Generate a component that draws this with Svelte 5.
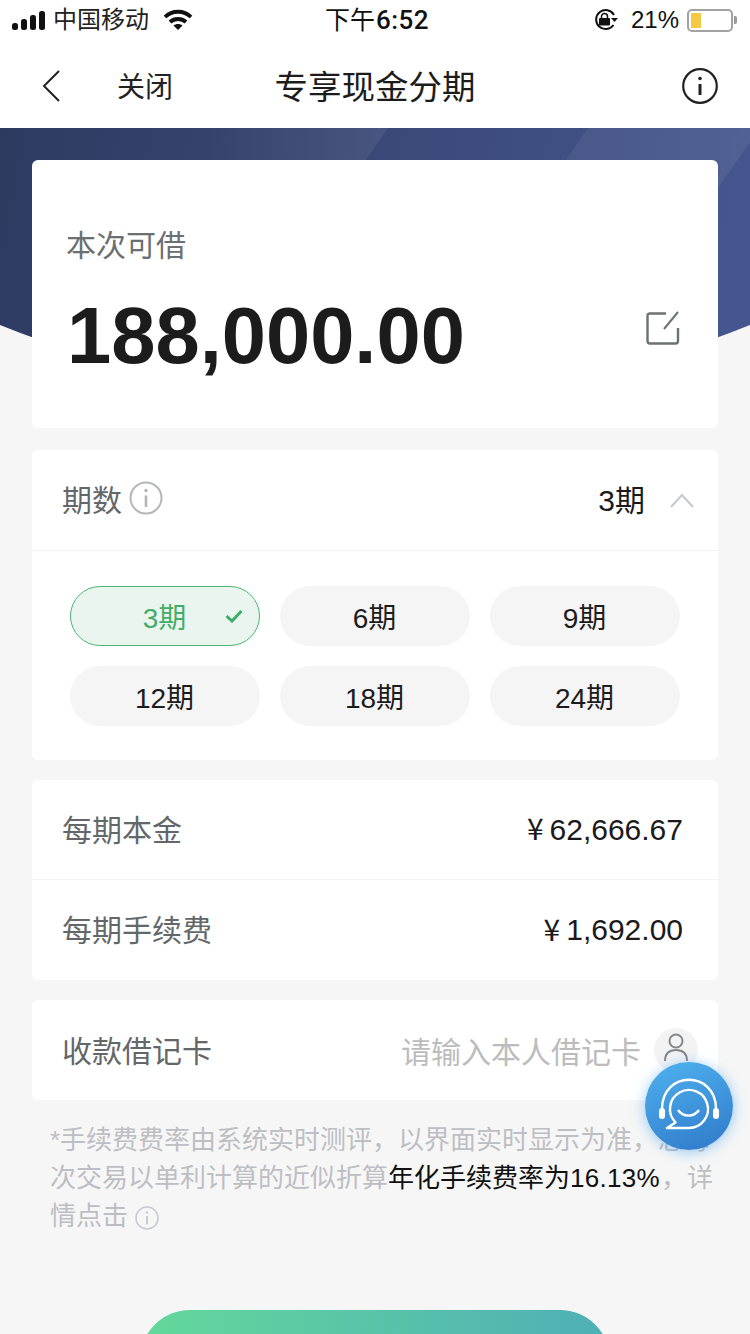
<script>
  const terms = ["3期", "6期", "9期", "12期", "18期", "24期"];
  let selected = $state("3期");
</script>

<div class="page">
  <header class="status">
    <div class="status-left">
      <svg class="signal" width="34" height="19" viewBox="0 0 34 19" fill="#111">
        <rect x="0" y="12" width="6" height="7" rx="2.500" />
        <rect x="9" y="8" width="6" height="11" rx="2.500" />
        <rect x="18" y="4" width="6" height="15" rx="2.500" />
        <rect x="27" y="0" width="6" height="19" rx="2.500" />
      </svg>
      <span class="carrier">中国移动</span>
      <svg class="wifi" width="30" height="22" viewBox="0 0 30 22" fill="none" stroke="#111" stroke-width="3.800">
        <path d="M2 8 C9 1 21 1 28 8" />
        <path d="M7 13 C11.500 9 18.500 9 23 13" />
        <path d="M15 21 L10.500 16.500 C13 14.500 17 14.500 19.500 16.500 Z" fill="#111" stroke="none" />
      </svg>
    </div>
    <div class="time"><span>下午</span><span class="clock">6:52</span></div>
    <div class="status-right">
      <svg width="24" height="22" viewBox="0 0 24 22" fill="none">
        <path d="M20 6 A9.500 9.500 0 1 0 19.500 16" stroke="#111" stroke-width="2" />
        <path d="M17 9 L24 9 L20.500 13 Z" fill="#111" />
        <rect x="5" y="9" width="11" height="7.500" rx="1" fill="#111" />
        <path d="M7.500 9 V7.500 A3 3 0 0 1 13.500 7.500 V9" stroke="#111" stroke-width="1.500" />
      </svg>
      <span class="percent">21%</span>
      <div class="battery"><div class="battery-level"></div></div>
      <div class="battery-cap"></div>
    </div>
  </header>

  <nav class="nav">
    <div class="nav-left">
      <svg width="20" height="34" viewBox="0 0 20 34" fill="none" stroke="#222" stroke-width="2">
        <path d="M17 2 L2 17 L17 32" />
      </svg>
      <span class="close">关闭</span>
    </div>
    <h1 class="title">专享现金分期</h1>
    <svg class="nav-info" width="36" height="36" viewBox="0 0 36 36" fill="none" stroke="#222">
      <circle cx="18" cy="18" r="16.800" stroke-width="2.200" />
      <path d="M18 16 V27" stroke-width="3" />
      <circle cx="18" cy="10.500" r="1.800" fill="#222" stroke="none" />
    </svg>
  </nav>

  <div class="hero">
    <svg class="hero-art" width="750" height="270" viewBox="0 0 750 270">
      <defs>
        <linearGradient id="bandA" x1="0" x2="1" y1="0" y2="0">
          <stop offset="0" stop-color="#fff" stop-opacity="0" />
          <stop offset="1" stop-color="#fff" stop-opacity="0.07" />
        </linearGradient>
        <linearGradient id="bandB" x1="0" x2="1" y1="0" y2="0">
          <stop offset="0" stop-color="#fff" stop-opacity="0.03" />
          <stop offset="1" stop-color="#fff" stop-opacity="0.07" />
        </linearGradient>
      </defs>
      <polygon points="200,0 260,0 388,0 200,270" fill="url(#bandA)" />
      <polygon points="588,0 760,0 570,270 400,270" fill="url(#bandB)" />
    </svg>
  </div>

  <main class="content">
    <section class="card amount-card">
      <div class="amount-label">本次可借</div>
      <div class="amount-row">
        <div class="amount">188,000.00</div>
        <svg width="34" height="34" viewBox="0 0 34 34" fill="none" stroke="#6c7173" stroke-width="2.400">
          <path d="M20 2.500 H4 Q1.500 2.500 1.500 5 V30 Q1.500 32.500 4 32.500 H29.500 Q32 32.500 32 30 V17" />
          <path d="M32 1 L18 18" stroke-width="2" />
        </svg>
      </div>
    </section>

    <section class="card">
      <div class="term-head">
        <div class="row-label">
          <span>期数</span>
          <svg class="label-info" width="34" height="34" viewBox="0 0 34 34" fill="none" stroke="#b4b6b8">
            <circle cx="17" cy="17" r="15.500" stroke-width="2" />
            <path d="M17 14.500 V26" stroke-width="2.600" />
            <circle cx="17" cy="9.500" r="1.700" fill="#b4b6b8" stroke="none" />
          </svg>
        </div>
        <div class="term-value">
          <span>3期</span>
          <svg width="26" height="16" viewBox="0 0 26 16" fill="none" stroke="#c6c8ca" stroke-width="2">
            <path d="M2 15 L13 3 L24 15" />
          </svg>
        </div>
      </div>
      <div class="term-grid">
        {#each terms as term}
          <button class="term" class:active={term === selected} onclick={() => (selected = term)}>
            {term}
            {#if term === selected}
              <svg class="check" width="18" height="14" viewBox="0 0 18 14" fill="none" stroke="#3fae66" stroke-width="3">
                <path d="M1.500 7 L7 12 L16.500 2" />
              </svg>
            {/if}
          </button>
        {/each}
      </div>
    </section>

    <section class="card">
      <div class="row with-line">
        <span class="row-label">每期本金</span>
        <span class="money"><span class="yen">¥</span><span>62,666.67</span></span>
      </div>
      <div class="row">
        <span class="row-label">每期手续费</span>
        <span class="money"><span class="yen">¥</span><span>1,692.00</span></span>
      </div>
    </section>

    <section class="card">
      <div class="row input-row">
        <span class="row-label">收款借记卡</span>
        <div class="card-input">
          <span class="placeholder">请输入本人借记卡</span>
          <div class="person">
            <svg width="26" height="34" viewBox="0 0 26 34" fill="none" stroke="#85888b" stroke-width="2">
              <circle cx="13" cy="8" r="6.500" />
              <path d="M2 28 C2 20 7 17 13 17 C19 17 24 20 24 28" />
            </svg>
          </div>
        </div>
      </div>
    </section>

    <div class="note">
      <div class="note-line"><span>*手续费费率由系统实时测评，以界面实时显示为准，总每</span></div>
      <div class="note-line">
        <span>次交易以单利计算的近似折算</span><span class="note-strong">年化手续费率为</span><span class="note-strong latin">16.13%</span><span>，详</span>
      </div>
      <div class="note-line">
        <span>情点击</span>
        <svg class="note-info" width="24" height="24" viewBox="0 0 24 24" fill="none" stroke="#c9cbd2">
          <circle cx="12" cy="12" r="11" stroke-width="1.600" />
          <path d="M12 10 V18.500" stroke-width="2" />
          <circle cx="12" cy="6.500" r="1.300" fill="#c9cbd2" stroke="none" />
        </svg>
      </div>
    </div>

    <button class="submit" aria-label="submit"></button>
  </main>

  <div class="service">
    <svg width="88" height="88" viewBox="-44 -44 88 88" fill="none" stroke="#fff">
      <path d="M-27 3 C-27 -36 27 -36 27 3" stroke-width="2.400" />
      <rect x="-30" y="2" width="6" height="11" rx="3" fill="#fff" stroke="none" />
      <rect x="24" y="2" width="6" height="11" rx="3" fill="#fff" stroke="none" />
      <path d="M0 22 A19 19 0 1 0 -13.500 16.400 L-22 22 Z" stroke-width="2.400" stroke-linejoin="round" />
      <path d="M-11 4 C-6 11.500 5 11.500 10 4" stroke-width="2.400" />
    </svg>
  </div>
</div>

<style>
  :global(body) {
    margin: 0;
    background: #f6f6f6;
  }

  .page {
    position: relative;
    width: 750px;
    height: 1334px;
    overflow: hidden;
    background: #f6f6f6;
    font-family: "Liberation Sans", "Noto Sans CJK SC", sans-serif;
    color: #111;
  }

  .status {
    display: grid;
    grid-template-columns: 1fr auto 1fr;
    align-items: center;
    height: 44px;
    box-sizing: border-box;
    padding: 0 13px 4px 12px;
    background: #fff;
    position: relative;
  }

  .status-left,
  .status-right {
    display: flex;
    align-items: center;
  }

  .status-right {
    justify-content: flex-end;
  }

  .carrier {
    font-size: 24px;
    line-height: 28px;
    margin-left: 7px;
    color: #222;
  }

  .wifi {
    margin-left: 14px;
  }

  .time {
    display: flex;
    align-items: center;
    padding-left: 5px;
    font-size: 25px;
    line-height: 28px;
  }

  .clock {
    margin-left: 1px;
    font-family: Roboto, sans-serif;
    font-size: 26px;
    font-weight: 500;
    letter-spacing: 0.5px;
  }

  .percent {
    font-size: 24px;
    margin: 0 8px 0 13px;
  }

  .battery {
    width: 46px;
    height: 23px;
    box-sizing: border-box;
    border: 2px solid #a2a2a2;
    border-radius: 5px;
    padding: 2px;
  }

  .battery-level {
    width: 10px;
    height: 100%;
    background: #f6c945;
  }

  .battery-cap {
    width: 3px;
    height: 8px;
    margin-left: 1px;
    background: #9a9a9a;
    border-radius: 0 2px 2px 0;
  }

  .nav {
    display: grid;
    grid-template-columns: 1fr auto 1fr;
    align-items: center;
    height: 84px;
    padding: 0 32px;
    background: #fff;
  }

  .nav-left {
    display: flex;
    align-items: center;
    gap: 55px;
    padding-left: 10px;
  }

  .close {
    font-size: 28px;
    padding-bottom: 2px;
    color: #222;
  }

  .title {
    margin: 0;
    padding-bottom: 4px;
    font-size: 33.500px;
    font-weight: 400;
    color: #1c1c1c;
  }

  .nav-info {
    justify-self: end;
  }

  .hero {
    position: relative;
    height: 270px;
    background: linear-gradient(100deg, #2d3a60 0%, #3a4876 45%, #465790 100%);
    clip-path: circle(1000px at 375px -730px);
  }

  .hero-art {
    display: block;
  }

  .content {
    position: relative;
    display: flex;
    flex-direction: column;
    gap: 20px;
    margin-top: -238px;
    padding: 0 32px;
  }

  .card {
    background: #fff;
    border-radius: 6px;
  }

  .amount-card {
    height: 268px;
    box-sizing: border-box;
    padding: 68px 38px 0 34px;
    margin-bottom: 2px;
  }

  .amount-label {
    font-size: 30px;
    line-height: 36px;
    color: #6b6f72;
  }

  .amount-row {
    display: flex;
    align-items: center;
    justify-content: space-between;
    margin-top: 26px;
  }

  .amount {
    margin-left: 1px;
    font-size: 79.500px;
    line-height: 92px;
    font-weight: 700;
    color: #1c1c1c;
  }

  .amount-row svg {
    margin-bottom: 16px;
  }

  .term-head {
    display: flex;
    align-items: center;
    justify-content: space-between;
    height: 101px;
    box-sizing: border-box;
    padding: 0 23px 4px 30px;
    border-bottom: 1px solid #f3f3f3;
  }

  .row-label {
    display: flex;
    align-items: center;
    font-size: 30px;
    color: #63676a;
  }

  .label-info {
    margin-left: 7px;
  }

  .term-value {
    display: flex;
    align-items: center;
    gap: 24px;
    font-size: 30px;
    color: #1a1a1a;
  }

  .term-value svg {
    margin-top: 4px;
  }

  .term-grid {
    display: grid;
    grid-template-columns: repeat(3, 190px);
    gap: 20px;
    padding: 35px 38px 34px;
  }

  .term {
    position: relative;
    height: 60px;
    border: 1px solid transparent;
    border-radius: 30px;
    background: #f5f5f5;
    font-family: inherit;
    font-size: 28px;
    color: #1c1c1c;
    padding: 0 1px 0 0;
  }

  .term.active {
    background: #ebf5ef;
    border-color: #4ab574;
    color: #43ad68;
  }

  .check {
    position: absolute;
    right: 16px;
    top: 22px;
  }

  .row {
    display: flex;
    align-items: center;
    justify-content: space-between;
    height: 100px;
    box-sizing: border-box;
    padding: 0 35px 4px 30px;
  }

  .input-row {
    padding-bottom: 0;
  }

  .input-row .row-label {
    padding-bottom: 2px;
  }

  .with-line {
    border-bottom: 1px solid #f3f3f3;
  }

  .money {
    display: flex;
    align-items: center;
    padding-top: 4px;
    font-size: 30px;
    color: #1a1a1a;
  }

  .yen {
    margin-right: 6px;
    padding-bottom: 5px;
    font-family: "Noto Sans CJK SC", sans-serif;
    font-size: 30px;
    line-height: 34px;
  }

  .card-input {
    display: flex;
    align-items: center;
    gap: 13px;
    margin-right: -15px;
  }

  .placeholder {
    font-size: 30px;
    color: #bcbcbc;
  }

  .person {
    display: flex;
    align-items: center;
    justify-content: center;
    width: 44px;
    height: 44px;
    border-radius: 50%;
    background: #f3f3f3;
  }

  .note {
    margin: 1px 0 0 18px;
    font-size: 26px;
    line-height: 38px;
    color: #bdbec3;
  }

  .note-line {
    white-space: nowrap;
  }

  .note-strong {
    color: #111;
  }

  .latin {
    letter-spacing: 0.3px;
    margin-right: 1px;
  }

  .note-info {
    vertical-align: -5px;
  }

  .submit {
    align-self: center;
    flex: none;
    width: 470px;
    height: 100px;
    margin-top: 55px;
    border: none;
    border-radius: 50px;
    background: linear-gradient(90deg, #64d89b, #4eafb6);
  }

  .service {
    position: absolute;
    left: 645px;
    top: 1062px;
    width: 88px;
    height: 88px;
    border-radius: 50%;
    background: linear-gradient(160deg, #4fb2ef, #2f79c9);
    box-shadow: 0 2px 14px rgba(70, 160, 240, 0.55);
  }
</style>
